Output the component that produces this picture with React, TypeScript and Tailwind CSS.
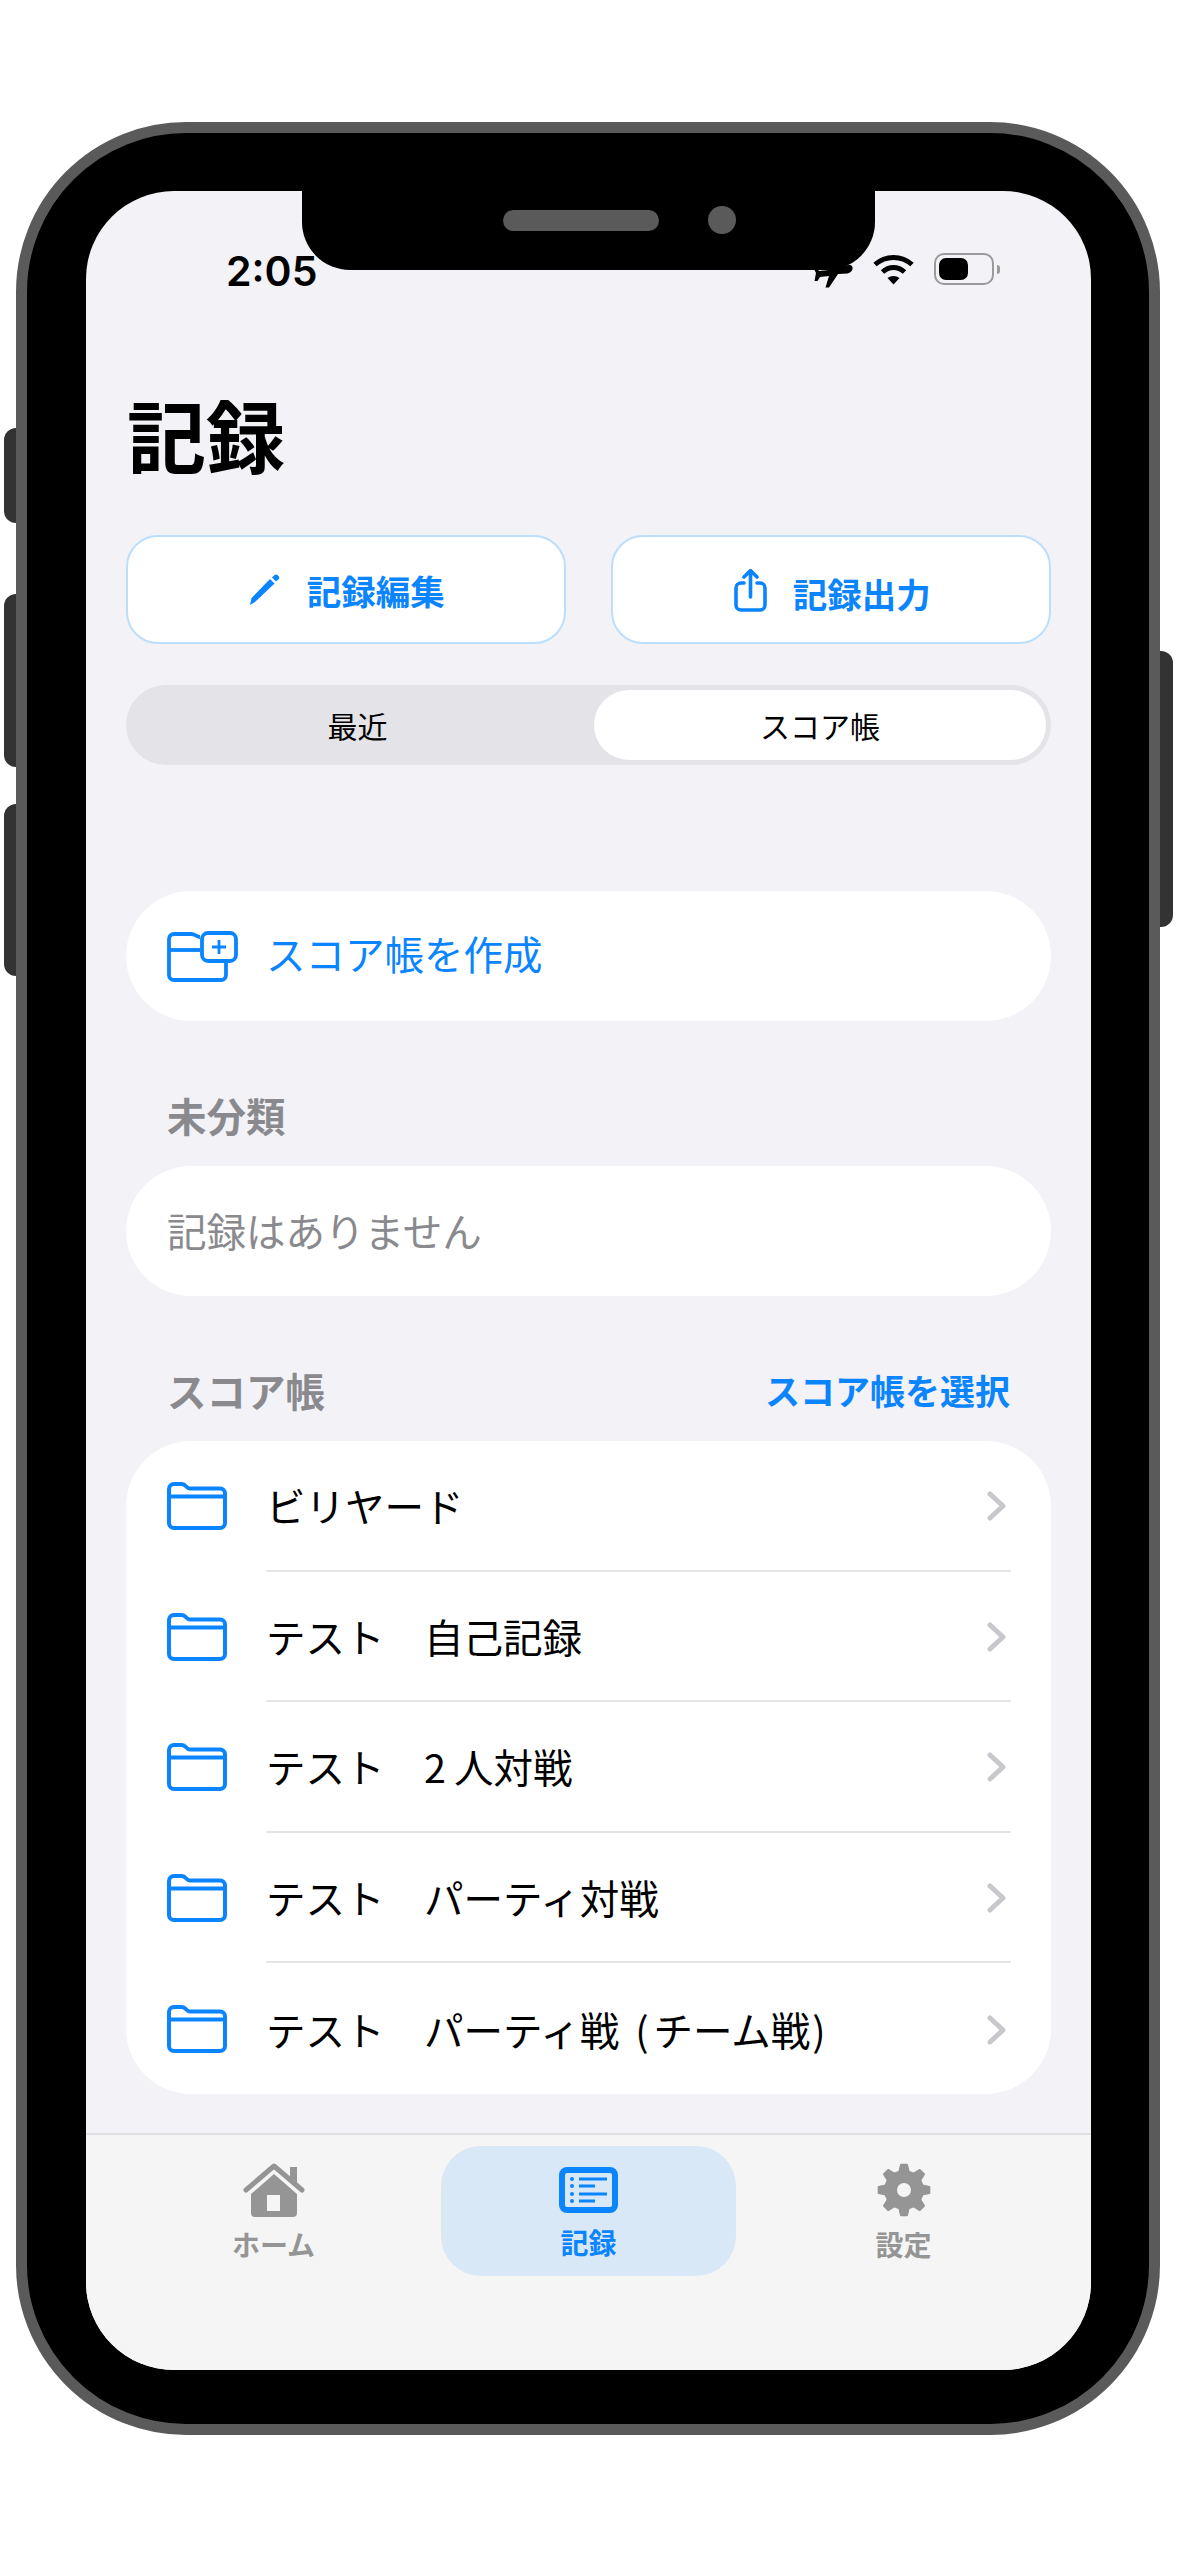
import type { ReactNode } from 'react'
import clsx from 'clsx'

const FONT = "font-['Noto_Sans_CJK_JP','Noto_Sans_CJK_SC',sans-serif]"

const FOLDERS: ReactNode[] = [
  'ビリヤード',
  'テスト　自己記録',
  <>テスト　<span className="mr-[8px]">2</span>人対戦</>,
  'テスト　パーティ対戦',
  <>テスト　パーティ戦<span className="mr-[5px] ml-[16px]">(</span>チーム戦<span className="ml-[2px]">)</span></>,
]

// 8 tooth gear, built once instead of hand writing every point
const gearPath = (() => {
  const cx = 27
  const cy = 27
  const pts: string[] = []
  for (let i = 0; i < 8; i++) {
    const a = (i * Math.PI) / 4 - Math.PI / 2
    const step = Math.PI / 8
    const p = (r: number, t: number) => `${(cx + r * Math.cos(t)).toFixed(2)} ${(cy + r * Math.sin(t)).toFixed(2)}`
    pts.push(p(19, a - step * 0.62), p(25.5, a - step * 0.3), p(25.5, a + step * 0.3), p(19, a + step * 0.62))
  }
  return `M${pts.join('L')}Z`
})()

function FolderIcon() {
  return (
    <svg width="60" height="48" viewBox="0 0 60 48" fill="none" stroke="#0a84ff" strokeWidth="4" className="shrink-0">
      <path d="M2 7a5 5 0 0 1 5-5h8c4 0 4 4.500 8 4.500h30a5 5 0 0 1 5 5V41a5 5 0 0 1-5 5H7a5 5 0 0 1-5-5z" />
      <path d="M3 14.500h54" strokeWidth="4" />
    </svg>
  )
}

function FolderPlusIcon() {
  return (
    <svg width="71" height="51" viewBox="0 0 71 51" fill="none" stroke="#0a84ff" strokeWidth="3.800" className="shrink-0">
      <path d="M33 6c-3 0-5-3-9-3H7a5 5 0 0 0-5 5v36a5 5 0 0 0 5 5h47a5 5 0 0 0 5-5V31" />
      <path d="M3 19h30" />
      <rect x="35" y="2" width="34" height="28" rx="6" />
      <path d="M52 9v14M45 16h14" strokeWidth="2.800" />
    </svg>
  )
}

function PencilIcon() {
  return (
    <svg width="32" height="31" viewBox="0 0 32 31" fill="#0a84ff" className="shrink-0">
      <path d="M1 31l1.500-7L21 5l4.500 4.500L6 28z" />
      <path d="M27 7.500l-4-4 2.500-2.500c1-.7 2-.7 2.800 0l1.500 1.500c.7.800.7 1.800 0 2.500z" />
    </svg>
  )
}

function ShareIcon() {
  return (
    <svg width="33" height="43" viewBox="0 0 33 43" fill="none" stroke="#0a84ff" strokeWidth="3.600" strokeLinecap="round" strokeLinejoin="round" className="mt-[1px] shrink-0">
      <path d="M10 14H7a5 5 0 0 0-5 5v17a5 5 0 0 0 5 5h19a5 5 0 0 0 5-5V19a5 5 0 0 0-5-5h-3" />
      <path d="M16.500 28V2M10 8l6.500-6.500L23 8" />
    </svg>
  )
}

function Chevron() {
  return (
    <svg width="19" height="30" viewBox="0 0 19 30" fill="none" stroke="#c7c7cc" strokeWidth="5" strokeLinecap="round" strokeLinejoin="round" className="mt-[2px]">
      <path d="M3 3l13 12L3 27" />
    </svg>
  )
}

function HomeIcon() {
  return (
    <svg width="62" height="54" viewBox="0 0 62 54" fill="#959595">
      <path d="M47 4h7v16l-7-6z" />
      <path d="M3 27L31 3l28 24" fill="none" stroke="#959595" strokeWidth="5" strokeLinecap="round" strokeLinejoin="round" />
      <path fillRule="evenodd" d="M31 11l23 20v19a4 4 0 0 1-4 4H12a4 4 0 0 1-4-4V31zM24 32v16h13V32z" />
    </svg>
  )
}

function RecordIcon() {
  return (
    <svg width="59" height="46" viewBox="0 0 59 46" fill="none" className="mb-[4px]">
      <rect x="3" y="3" width="53" height="40" rx="5" stroke="#0a84ff" strokeWidth="6" />
      <g fill="#0a84ff">
        <circle cx="13" cy="12" r="2" />
        <circle cx="13" cy="19" r="2" />
        <circle cx="13" cy="27" r="2" />
        <circle cx="13" cy="34" r="2" />
        <rect x="20" y="10.500" width="28" height="3" />
        <rect x="20" y="17.500" width="16" height="3" />
        <rect x="20" y="25.500" width="28" height="3" />
        <rect x="20" y="32.500" width="16" height="3" />
      </g>
    </svg>
  )
}

function GearIcon() {
  return (
    <svg width="54" height="54" viewBox="0 0 54 54">
      <path fillRule="evenodd" d={`${gearPath}M27 19a8 8 0 1 0 0 16a8 8 0 1 0 0-16z`} fill="#959595" stroke="#959595" strokeWidth="2" strokeLinejoin="round" />
    </svg>
  )
}

function StatusIcons() {
  return (
    <div className="ml-auto flex items-start gap-[20px] pr-[91px]">
      <svg width="40" height="48" viewBox="0 0 40 48" fill="#000" className="mt-[-11px]">
        <path d="M36 25c3 0 4 2 3.500 4s-2 4-5 4.500L25 34 16 47.500h-3.500L16 36l-9 1-2.500 4H1.500L3 33 0 27h3l3 4 10-1L12 14h4l12 12z" />
      </svg>
      <svg width="41" height="31" viewBox="0 0 41 31" fill="none" stroke="#000" strokeWidth="5" className="mt-[3px]">
        <path d="M2 10.500C12.500 1 28.500 1 39 10.500" />
        <path d="M9.500 18c6.500-6 15.500-6 22 0" />
        <path d="M20.500 30.500l-6-6.500c3.500-2.700 8.500-2.700 12 0z" fill="#000" stroke="none" />
      </svg>
      <div className="mt-[2px] flex items-center">
        <div className="box-border h-[32px] w-[60px] rounded-[10px] border-2 border-[#9a9a9a] p-[3px]">
          <div className="h-full w-[29px] rounded-[7px] bg-black" />
        </div>
        <div className="ml-[3px] h-[9px] w-[3px] rounded-r-full bg-[#9a9a9a]" />
      </div>
    </div>
  )
}

function TabItem({ label, active, icon }: { label: string; active?: boolean; icon: ReactNode }) {
  return (
    <div className={clsx('flex h-[130px] flex-col items-center rounded-[40px]', active && 'bg-[#d9e8f6]')}>
      <div className="flex h-[71px] items-end">{icon}</div>
      <span className={clsx('text-[28px] leading-[36px] font-bold', active ? 'mt-[7px] text-[#0a84ff]' : 'mt-[9px] text-[#959595]')}>{label}</span>
    </div>
  )
}

export default function App() {
  return (
    <div className={clsx('h-[2560px] w-[1177px] overflow-hidden bg-white pt-[122px] pl-[16px]', FONT)}>
      <div className="relative h-[2313px] w-[1144px]">
        {/* side buttons */}
        <div className="absolute top-[306px] left-[-12px] h-[95px] w-[12px] rounded-l-[12px] bg-[#333333]" />
        <div className="absolute top-[472px] left-[-12px] h-[173px] w-[12px] rounded-l-[12px] bg-[#333333]" />
        <div className="absolute top-[682px] left-[-12px] h-[172px] w-[12px] rounded-l-[12px] bg-[#333333]" />
        <div className="absolute top-[529px] right-[-13px] h-[276px] w-[13px] rounded-r-[12px] bg-[#333333]" />

        <div className="box-border h-full w-full rounded-[170px] border-[11px] border-[#5a5a5a] bg-black pt-[58px] pr-[58px] pb-[54px] pl-[59px]">
          <div className="relative flex h-full flex-col overflow-hidden rounded-[88px] bg-[#f2f2f7]">
            {/* status bar */}
            <div className="flex h-[150px] shrink-0 items-start pt-[60px] pl-[140px]">
              <span className="font-['Inter',sans-serif] text-[41px] leading-[40px] font-semibold text-black">2:05</span>
              <StatusIcons />
            </div>

            {/* notch */}
            <div className="absolute top-0 left-[216px] flex h-[79px] w-[573px] items-start rounded-b-[48px] bg-black pt-[15px] pl-[201px]">
              <div className="mt-[4px] h-[21px] w-[156px] rounded-full bg-[#5a5a5a]" />
              <div className="ml-[49px] h-[28px] w-[28px] rounded-full bg-[#5a5a5a]" />
            </div>

            <div className="flex flex-col px-[40px]">
              <h1 className="mt-[48px] ml-[1px] h-[90px] text-[79px] leading-[90px] font-bold text-black">記録</h1>

              <div className="mt-[56px] flex gap-[45px]">
                <button className="box-border flex h-[109px] flex-1 items-center justify-center gap-[26px] rounded-[32px] border-2 border-[#bcdefd] bg-white pl-[2px]">
                  <PencilIcon />
                  <span className="text-[34.500px] leading-[44px] font-bold text-[#0a84ff]">記録編集</span>
                </button>
                <button className="box-border flex h-[109px] flex-1 items-center justify-center gap-[26px] rounded-[32px] border-2 border-[#bcdefd] bg-white pl-[3px]">
                  <ShareIcon />
                  <span className="mt-[6px] text-[34.500px] leading-[44px] font-bold text-[#0a84ff]">記録出力</span>
                </button>
              </div>

              <div className="mt-[41px] flex h-[80px] rounded-[40px] bg-[#e3e3e8] p-[5px]">
                <div className="flex flex-1 items-center justify-center pr-[10px] text-[30px] text-black">最近</div>
                <div className="flex w-[452px] items-center justify-center rounded-[35px] bg-white text-[30px] text-black">スコア帳</div>
              </div>

              <div className="mt-[126px] flex h-[130px] items-center gap-[28px] rounded-[65px] bg-white pl-[41px]">
                <FolderPlusIcon />
                <span className="mb-[6px] text-[39.500px] leading-[50px] text-[#0a84ff]">スコア帳を作成</span>
              </div>

              <div className="mt-[70px] h-[50px] pl-[41px] text-[39.500px] leading-[47px] font-bold text-[#8a8a8e]">未分類</div>

              <div className="mt-[25px] flex h-[130px] items-center rounded-[65px] bg-white pl-[41px] text-[39.500px] leading-[50px] text-[#8a8a8e]">
                <span className="mb-[3px]">記録はありません</span>
              </div>

              <div className="mt-[70px] flex h-[50px] items-center justify-between px-[41px]">
                <span className="mb-[3px] text-[39.500px] leading-[50px] font-bold text-[#8a8a8e]">スコア帳</span>
                <span className="mb-[3px] text-[35px] leading-[50px] font-bold text-[#0a84ff]">スコア帳を選択</span>
              </div>

              <div className="mt-[25px] overflow-hidden rounded-[65px] bg-white">
                {FOLDERS.map((name, i) => (
                  <div key={i} className="flex h-[130.600px] items-center pl-[41px]">
                    <FolderIcon />
                    <div className={clsx('mr-[40px] ml-[39px] box-border flex h-full flex-1 items-center justify-between pr-[5px]', i < FOLDERS.length - 1 && 'border-b-2 border-[#e5e5e7]')}>
                      <span className="text-[39.500px] leading-[50px] text-black">{name}</span>
                      <Chevron />
                    </div>
                  </div>
                ))}
              </div>
            </div>

            {/* tab bar */}
            <div className="mt-auto box-border grid h-[237px] grid-cols-3 gap-[20px] border-t-2 border-[#e0e0e2] bg-[#f5f5f5] px-[40px] pt-[11px]">
              <TabItem label="ホーム" icon={<HomeIcon />} />
              <TabItem label="記録" active icon={<RecordIcon />} />
              <TabItem label="設定" icon={<GearIcon />} />
            </div>
          </div>
        </div>
      </div>
    </div>
  )
}
